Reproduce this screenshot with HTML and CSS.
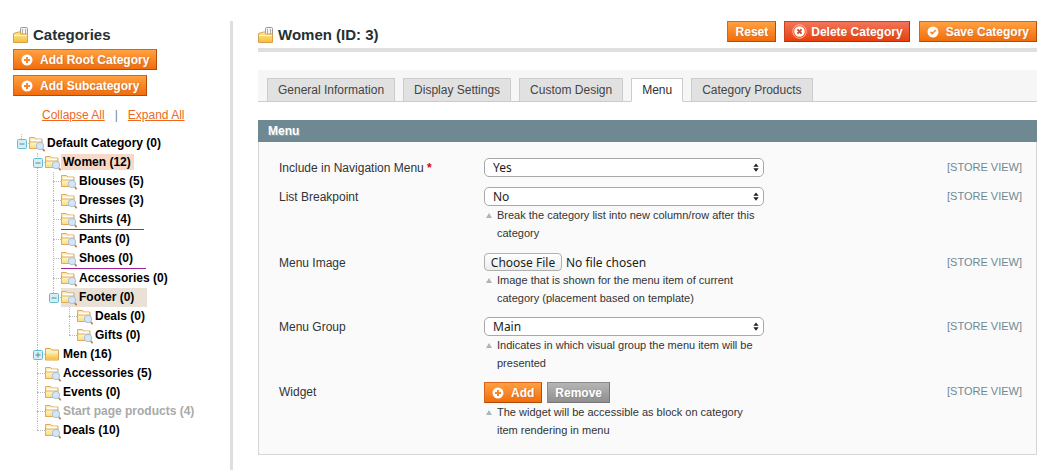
FILE: index.html
```html
<!DOCTYPE html>
<html lang="en">
<head>
<meta charset="utf-8">
<title>Women (ID: 3)</title>
<link rel="stylesheet" href="styles.css">
</head>
<body>
<svg class="defs" width="0" height="0" aria-hidden="true">
  <defs>
    <linearGradient id="fy" x1="0" y1="0" x2="0" y2="1"><stop offset="0" stop-color="#fff6c8"/><stop offset="1" stop-color="#fbdb78"/></linearGradient>
    <linearGradient id="fm" x1="0" y1="0" x2="0" y2="1"><stop offset="0" stop-color="#fdeaa2"/><stop offset="1" stop-color="#f4bd38"/></linearGradient>
    <symbol id="folder-search" viewBox="0 0 16 16">
      <path d="M.5 3.500V1.500h5l1.500 1.500h6v9.500H.5z" fill="#fbe9b0" stroke="#e0ab5c"/>
      <path d="M2 3.500h10v3H2z" fill="#fff"/>
      <path d="M.5 12.500V6h12.500v6.500z" fill="url(#fy)" stroke="#e0ab5c"/>
      <circle cx="11" cy="10" r="3.700" fill="#d6e5f4" stroke="#a6c2de"/>
      <path d="M13.800 13l1.800 2.300" stroke="#b9783c" stroke-width="1.500"/>
    </symbol>
    <symbol id="folder-closed" viewBox="0 0 16 16">
      <path d="M.5 3.500V1.500h5l1.500 1.500h6.500v10H.5z" fill="#fdf0bf" stroke="#dca24c"/>
      <path d="M1 6h12v6.500H1z" fill="url(#fm)"/>
    </symbol>
    <symbol id="folder-title" viewBox="0 0 16 16">
      <rect x="7.500" y=".5" width="7" height="9" rx="1" fill="#f4f4f4" stroke="#999"/>
      <path d="M9.500 2v5M12.500 2v5" stroke="#b0b0b0"/>
      <path d="M.5 15.500V6.500l5-1.500h2v2h7v8.500z" fill="url(#fm)" stroke="#d8a04a"/>
      <path d="M1 8.500h13" stroke="#fff6cc"/>
    </symbol>
    <symbol id="i-plus" viewBox="0 0 12 12">
      <path fill="#fff" fill-rule="evenodd" d="M6 .5a5.500 5.500 0 1 1 0 11 5.500 5.500 0 0 1 0-11zM5 3v2H3v2h2v2h2V7h2V5H7V3z"/>
    </symbol>
    <symbol id="i-check" viewBox="0 0 12 12">
      <path fill="#fff" fill-rule="evenodd" d="M6 .5a5.500 5.500 0 1 1 0 11 5.500 5.500 0 0 1 0-11zM8.300 3.500 5.300 6.600 4 5.300 2.900 6.400 5.300 8.800 9.400 4.600z"/>
    </symbol>
    <symbol id="i-delete" viewBox="0 0 16 16">
      <circle cx="8" cy="8" r="7.200" fill="none" stroke="#f6c3a8"/>
      <circle cx="8" cy="8" r="5.600" fill="#fff"/>
      <path d="M5.800 5.800l4.400 4.400M10.200 5.800l-4.400 4.400" stroke="#d8432a" stroke-width="2"/>
    </symbol>
    <symbol id="i-minus" viewBox="0 0 10 10">
      <rect x=".5" y=".5" width="9" height="9" rx="1" fill="#d6eef3" stroke="#62bdd0"/>
      <path d="M2.500 5h5" stroke="#4f8fa3"/>
    </symbol>
    <symbol id="i-toggle-plus" viewBox="0 0 10 10">
      <rect x=".5" y=".5" width="9" height="9" rx="1" fill="#d6eef3" stroke="#62bdd0"/>
      <path d="M2.500 5h5M5 2.500v5" stroke="#4f8fa3"/>
    </symbol>
    <symbol id="i-updown" viewBox="0 0 8 12">
      <path d="M4 .5 7.500 5h-7zM4 11.500.5 7h7z" fill="#222"/>
    </symbol>
  </defs>
</svg>

<div class="page">
  <aside class="side">
    <h3 class="side-title"><svg class="icon-title"><use href="#folder-title"/></svg>Categories</h3>
    <div class="side-actions">
      <button class="btn" type="button"><svg class="bi"><use href="#i-plus"/></svg>Add Root Category</button>
      <button class="btn" type="button"><svg class="bi"><use href="#i-plus"/></svg>Add Subcategory</button>
    </div>
    <div class="tree-links"><a href="#">Collapse All</a><span class="pipe">|</span><a href="#">Expand All</a></div>

    <ul class="tree tree-root">
      <li>
        <div class="row"><svg class="toggle"><use href="#i-minus"/></svg><svg class="fi"><use href="#folder-search"/></svg><span class="label">Default Category (0)</span></div>
        <ul class="tree">
          <li>
            <div class="row"><svg class="toggle"><use href="#i-minus"/></svg><svg class="fi"><use href="#folder-search"/></svg><span class="label label-current">Women (12)</span></div>
            <ul class="tree">
              <li><div class="row"><svg class="fi"><use href="#folder-search"/></svg><span class="label">Blouses (5)</span></div></li>
              <li><div class="row"><svg class="fi"><use href="#folder-search"/></svg><span class="label">Dresses (3)</span></div></li>
              <li><div class="row row-sep"><span class="node node-sep"><svg class="fi"><use href="#folder-search"/></svg><span class="label">Shirts (4)</span></span></div></li>
              <li><div class="row"><svg class="fi"><use href="#folder-search"/></svg><span class="label">Pants (0)</span></div></li>
              <li><div class="row row-sep"><span class="node node-sep"><svg class="fi"><use href="#folder-search"/></svg><span class="label">Shoes (0)</span></span></div></li>
              <li><div class="row"><svg class="fi"><use href="#folder-search"/></svg><span class="label">Accessories (0)</span></div></li>
              <li>
                <div class="row"><svg class="toggle"><use href="#i-minus"/></svg><span class="node node-footer"><svg class="fi"><use href="#folder-search"/></svg><span class="label">Footer (0)</span></span></div>
                <ul class="tree">
                  <li><div class="row"><svg class="fi"><use href="#folder-search"/></svg><span class="label">Deals (0)</span></div></li>
                  <li><div class="row"><svg class="fi"><use href="#folder-search"/></svg><span class="label">Gifts (0)</span></div></li>
                </ul>
              </li>
            </ul>
          </li>
          <li><div class="row"><svg class="toggle"><use href="#i-toggle-plus"/></svg><svg class="fi"><use href="#folder-closed"/></svg><span class="label">Men (16)</span></div></li>
          <li><div class="row"><svg class="fi"><use href="#folder-search"/></svg><span class="label">Accessories (5)</span></div></li>
          <li><div class="row"><svg class="fi"><use href="#folder-search"/></svg><span class="label">Events (0)</span></div></li>
          <li><div class="row"><svg class="fi"><use href="#folder-search"/></svg><span class="label label-off">Start page products (4)</span></div></li>
          <li><div class="row"><svg class="fi"><use href="#folder-search"/></svg><span class="label">Deals (10)</span></div></li>
        </ul>
      </li>
    </ul>
  </aside>

  <main class="main">
    <header class="head">
      <h3 class="head-title"><svg class="icon-title"><use href="#folder-title"/></svg>Women (ID: 3)</h3>
      <div class="head-actions">
        <button class="btn btn-reset" type="button">Reset</button>
        <button class="btn btn-del" type="button"><svg class="bi-del"><use href="#i-delete"/></svg>Delete Category</button>
        <button class="btn" type="button"><svg class="bi"><use href="#i-check"/></svg>Save Category</button>
      </div>
    </header>

    <nav class="tabs">
      <a class="tab" href="#">General Information</a>
      <a class="tab" href="#">Display Settings</a>
      <a class="tab" href="#">Custom Design</a>
      <a class="tab tab-active" href="#">Menu</a>
      <a class="tab" href="#">Category Products</a>
    </nav>

    <section class="section">
      <h4 class="section-head">Menu</h4>
      <div class="fieldset">
        <div class="field">
          <label class="flabel">Include in Navigation Menu <span class="req">*</span></label>
          <div class="fvalue">
            <div class="sel"><select><option>Yes</option></select><svg class="updown"><use href="#i-updown"/></svg></div>
          </div>
          <div class="scope">[STORE VIEW]</div>
        </div>
        <div class="field">
          <label class="flabel">List Breakpoint</label>
          <div class="fvalue">
            <div class="sel"><select><option>No</option></select><svg class="updown"><use href="#i-updown"/></svg></div>
            <p class="note">Break the category list into new column/row after this category</p>
          </div>
          <div class="scope">[STORE VIEW]</div>
        </div>
        <div class="field field-file">
          <label class="flabel">Menu Image</label>
          <div class="fvalue">
            <div class="file"><button class="file-btn" type="button">Choose File</button><span class="file-name">No file chosen</span></div>
            <p class="note">Image that is shown for the menu item of current category (placement based on template)</p>
          </div>
          <div class="scope">[STORE VIEW]</div>
        </div>
        <div class="field">
          <label class="flabel">Menu Group</label>
          <div class="fvalue">
            <div class="sel"><select><option>Main</option></select><svg class="updown"><use href="#i-updown"/></svg></div>
            <p class="note">Indicates in which visual group the menu item will be presented</p>
          </div>
          <div class="scope">[STORE VIEW]</div>
        </div>
        <div class="field">
          <label class="flabel">Widget</label>
          <div class="fvalue">
            <div class="widget-btns">
              <button class="btn" type="button"><svg class="bi"><use href="#i-plus"/></svg>Add</button>
              <button class="btn btn-grey" type="button">Remove</button>
            </div>
            <p class="note">The widget will be accessible as block on category item rendering in menu</p>
          </div>
          <div class="scope">[STORE VIEW]</div>
        </div>
      </div>
    </section>
  </main>
</div>
</body>
</html>
```

FILE: styles.css
```css
* { box-sizing: border-box; }
html, body { margin: 0; height: 470px; overflow: hidden; background: #fff; }
body { font: 12px/1.25 "Liberation Sans", Arial, sans-serif; color: #2f2f2f; }
.defs { position: absolute; }
ul { list-style: none; margin: 0; padding: 0; }
h3, h4, p { margin: 0; }

.page { display: flex; height: 470px; padding-top: 21px; }

/* sidebar */
.side { width: 233px; flex: none; padding: 5px 0 0 13px; border-right: 3px solid #dedede; }
.side-title, .head-title { display: flex; align-items: center; font-size: 15px; font-weight: bold; color: #253033; line-height: 17px; }
.icon-title { width: 16px; height: 16px; margin-right: 4px; flex: none; }
.side-actions { display: flex; flex-direction: column; align-items: flex-start; gap: 5px; margin-top: 6px; }
.tree-links { display: flex; align-items: center; height: 16px; margin: 11px 0 0 29px; }
.tree-links a { color: #ec6a1e; text-decoration: underline; }
.pipe { color: #6f8992; margin: 0 10px; }

.tree-root { margin-top: 11px; }
.tree .tree { padding-left: 16px; }
.tree li { position: relative; }
.tree li::before { content: ""; position: absolute; left: 8px; top: 0; bottom: 0; border-left: 1px dotted #bdbdbd; }
.tree li:last-child::before { bottom: auto; height: 9px; }
.tree li::after { content: ""; position: absolute; left: 8px; top: 9px; width: 8px; border-top: 1px dotted #bdbdbd; }
.row { position: relative; z-index: 1; display: flex; align-items: flex-start; height: 19px; padding-left: 16px; }
.row-sep { height: 20px; }
.toggle { position: absolute; left: 4px; top: 5px; width: 10px; height: 10px; }
.fi { width: 16px; height: 16px; flex: none; margin-top: 2px; }
.label { font-weight: bold; color: #000; line-height: 19px; padding: 0 2px; white-space: nowrap; }
.label-current { background: #f7d9c9; line-height: 16px; margin-top: 1px; padding-right: 3px; }
.label-off { color: #a9a9a9; }
.node { display: flex; align-items: flex-start; }
.node-sep { height: 20px; padding-right: 11px; border-bottom: 1px solid #a0209a; }
.node-footer { height: 19px; padding-right: 11px; background: #e9e1d6; }

/* buttons */
.btn {
  display: inline-flex; align-items: center; height: 21px; padding: 0 7px;
  border: 1px solid; border-color: #d8651a #b14d0b #b14d0b #d8651a;
  background: linear-gradient(#ffa142, #f26c0b);
  color: #fff; font: bold 12px/1 "Liberation Sans", Arial, sans-serif;
  text-shadow: 1px 1px 0 #d9742b; white-space: nowrap; cursor: pointer;
}
.bi { width: 12px; height: 12px; margin-right: 7px; flex: none; }
.bi-del { width: 15px; height: 15px; margin-right: 4px; flex: none; }
.btn-reset { padding: 0 7px 0 8px; }
.btn-del { margin-right: 1px; padding-right: 6px; background: linear-gradient(#f3745a, #e8400a); border-color: #c8431f #a8330b #a8330b #c8431f; text-shadow: 1px 1px 0 #cf5433; }
.btn-grey { background: linear-gradient(#b5b5b5, #8f8f8f); border-color: #8a8a8a #777 #777 #8a8a8a; text-shadow: 1px 1px 0 #8a8a8a; }

/* main */
.main { flex: 1; min-width: 0; padding: 0 13px 0 25px; }
.head { display: flex; justify-content: space-between; align-items: flex-start; height: 31px; border-bottom: 4px solid #dfdfdf; }
.head-title { margin-top: 5px; }
.head-actions { display: flex; gap: 8px; }

.tabs { display: flex; gap: 8px; height: 32px; margin-top: 18px; padding: 8px 0 0 9px; background: #f6f6f6; border-bottom: 1px solid #ccc; }
.tab { display: block; height: 24px; padding: 0 10px; border: 1px solid #ccc; background: #e1e1e1; color: #444; line-height: 22px; text-decoration: none; white-space: nowrap; }
.tab-active { background: #fff; border-bottom-color: #fff; color: #2f2f2f; }

.section { margin-top: 18px; }
.section-head { height: 22px; padding-left: 10px; background: #6f8992; color: #fff; font-size: 12px; line-height: 22px; font-weight: bold; text-shadow: 1px 1px 0 #8fa5ad; }
.fieldset { height: 313px; padding: 16px 0 0 20px; background: #fafafa; border: 1px solid #d6d6d6; border-top: 0; }
.field { display: grid; grid-template-columns: 205px 280px 1fr; margin-bottom: 10px; }
.field-file { margin-top: 11px; }
.flabel { line-height: 18px; padding-top: 1px; color: #333; }
.req { color: #d40707; font-weight: bold; }
.scope { padding: 3px 0 0 183px; font-size: 11px; line-height: 13px; color: #6f8992; white-space: nowrap; }

.sel { position: relative; height: 19px; }
.sel select { appearance: none; display: block; width: 100%; height: 19px; padding: 0 0 4px 8px; border: 1px solid #a8a8a8; border-radius: 5px; background: #fff; color: #1c1c1c; font: 12px "Noto Sans", sans-serif; }
.updown { position: absolute; right: 5px; top: 4px; width: 6px; height: 11px; pointer-events: none; }

.note { position: relative; padding-left: 13px; font-size: 11px; line-height: 18px; color: #333; width: 272px; }
.note::before { content: ""; position: absolute; left: 2px; top: 7px; border: 3px solid transparent; border-top: 0; border-bottom: 5px solid #a9b6bd; }

.file { display: flex; align-items: center; height: 18px; }
.file-btn { height: 18px; width: 78px; padding: 2px 0 0; border: 1px solid #b0b0b0; border-radius: 4px; background: linear-gradient(#fff, #ececec); color: #1c1c1c; font: 12px/1 "Noto Sans", sans-serif; }
.file-name { margin-left: 4px; font: 12px "Noto Sans", sans-serif; color: #1c1c1c; }

.widget-btns { display: flex; gap: 5px; }
```
